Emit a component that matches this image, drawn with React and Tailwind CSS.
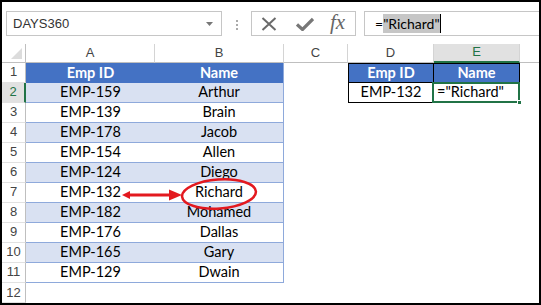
import React from 'react';

const rows = [
  ['EMP-159', 'Arthur'],
  ['EMP-139', 'Brain'],
  ['EMP-178', 'Jacob'],
  ['EMP-154', 'Allen'],
  ['EMP-124', 'Diego'],
  ['EMP-132', 'Richard'],
  ['EMP-182', 'Mohamed'],
  ['EMP-176', 'Dallas'],
  ['EMP-165', 'Gary'],
  ['EMP-129', 'Dwain'],
];

const cellFont = { fontFamily: 'Lato, "Open Sans", sans-serif' };

function RowHead({ n, selected }) {
  return (
    <div
      className={`flex items-center justify-center text-[13px] border-b border-[#e1e1e1] ${
        selected
          ? 'bg-[#e1e1e1] text-[#217346] border-r-2 border-r-[#217346]'
          : 'bg-white text-[#444] border-r border-r-[#bfbfbf]'
      }`}
    >
      {n}
    </div>
  );
}

function ColHead({ label, selected }) {
  return (
    <div
      className={`flex items-center justify-center text-[13px] border-r border-[#d4d4d4] ${
        selected
          ? 'bg-[#e1e1e1] text-[#217346] border-b-2 border-b-[#217346]'
          : 'bg-white text-[#444] border-b border-b-[#bfbfbf]'
      }`}
    >
      {label}
    </div>
  );
}

export default function App() {
  return (
    <div
      className="w-[541px] h-[305px] border-2 border-black bg-white flex flex-col overflow-hidden"
      style={{ fontFamily: '"Liberation Sans", Arial, sans-serif' }}
    >
      {/* toolbar: name box, buttons, formula bar */}
      <div className="h-[45px] flex items-start pl-[4px] pt-[9px]">
        <div className="w-[216px] h-[25px] border border-[#c6c6c6] flex items-center justify-between pl-[6px] pr-[8px] text-[13px] text-[#333]">
          <span>DAYS360</span>
          <svg width="7" height="4" viewBox="0 0 7 4"><path d="M0 0 H7 L3.5 4 Z" fill="#777" /></svg>
        </div>
        <div className="ml-[14px] mt-[9px] flex flex-col gap-[2px]">
          <span className="w-[2px] h-[2px] bg-[#aaa]" />
          <span className="w-[2px] h-[2px] bg-[#aaa]" />
          <span className="w-[2px] h-[2px] bg-[#aaa]" />
        </div>
        <div className="ml-[13px] w-[105px] h-[25px] border border-[#c6c6c6] flex items-center pl-[9px]">
          <svg width="16" height="14" viewBox="0 0 16 14">
            <path d="M1.5 1 L14.5 13 M14.5 1 L1.5 13" stroke="#6a6a6a" strokeWidth="2" />
          </svg>
          <svg className="ml-[19px]" width="18" height="14" viewBox="0 0 18 14">
            <path d="M1 7.5 L6.5 12.5 L17 2" stroke="#777" strokeWidth="3.2" fill="none" strokeLinejoin="miter" />
          </svg>
          <span
            className="ml-[16px] text-[21px] italic text-[#666] leading-none -mt-[2px]"
            style={{ fontFamily: '"Liberation Serif", serif' }}
          >
            fx
          </span>
        </div>
        <div
          className="ml-[8px] flex-1 h-[25px] border border-[#c6c6c6] border-r-0 flex items-center pl-[10px] text-[14px] text-black"
          style={cellFont}
        >
          <span>=</span>
          <span className="bg-[#c6c6c6] leading-[19px]">"Richard"</span>
          <span className="w-px h-[19px] bg-black" />
        </div>
      </div>

      {/* sheet grid */}
      <div className="relative flex-1 grid grid-cols-[24px_129px_129px_64px_86px_86px_1fr] grid-rows-[19px_repeat(11,20px)_1fr]">
        {/* column headers */}
        <div className="bg-white border-r border-[#bfbfbf] border-b border-b-[#bfbfbf] flex items-end justify-end p-[3px]">
          <svg width="11" height="11" viewBox="0 0 11 11"><path d="M11 0 V11 H0 Z" fill="#dcdcdc" /></svg>
        </div>
        <ColHead label="A" />
        <ColHead label="B" />
        <ColHead label="C" />
        <ColHead label="D" />
        <ColHead label="E" selected />
        <div className="bg-white border-b border-b-[#bfbfbf]" />

        {/* row 1 */}
        <RowHead n={1} />
        <div className="bg-[#4472c4] text-white font-bold text-[14.5px] flex items-center justify-center" style={cellFont}>Emp ID</div>
        <div className="bg-[#4472c4] text-white font-bold text-[14.5px] flex items-center justify-center border-r border-[#8ea9db]" style={cellFont}>Name</div>
        <div />
        <div className="bg-[#4472c4] text-white font-bold text-[14.5px] flex items-center justify-center border border-black" style={cellFont}>Emp ID</div>
        <div className="bg-[#4472c4] text-white font-bold text-[14.5px] flex items-center justify-center border-y border-r border-black" style={cellFont}>Name</div>
        <div />

        {/* rows 2-11 */}
        {rows.map(([id, name], i) => {
          const n = i + 2;
          const shade = n % 2 === 0 ? 'bg-[#d9e1f2]' : 'bg-white';
          return (
            <React.Fragment key={id}>
              <RowHead n={n} selected={n === 2} />
              <div className={`${shade} border-b border-[#8ea9db] flex items-center justify-center text-[14.5px] text-black`} style={cellFont}>
                {id}
              </div>
              <div className={`${shade} border-b border-r border-[#8ea9db] flex items-center justify-center text-[14.5px] text-black`} style={cellFont}>
                {name}
              </div>
              <div />
              {n === 2 ? (
                <>
                  <div className="border-x border-b border-black flex items-center justify-center text-[14.5px] text-black" style={cellFont}>
                    EMP-132
                  </div>
                  <div className="relative border-b border-r border-black flex items-center pl-[3px] text-[14.5px] text-black" style={cellFont}>
                    ="Richard"
                    <div className="absolute -left-[2px] -top-[1px] -right-[1px] -bottom-[1px] border-2 border-[#217346]" />
                    <div className="absolute -right-[3px] -bottom-[3px] w-[5px] h-[5px] bg-[#217346] border border-white" />
                  </div>
                </>
              ) : (
                <>
                  <div />
                  <div />
                </>
              )}
              <div />
            </React.Fragment>
          );
        })}

        {/* row 12 */}
        <RowHead n={12} />
        <div />
        <div />
        <div />
        <div />
        <div />
        <div />

        {/* red annotation: arrow and ellipse */}
        <svg className="absolute left-0 top-0 pointer-events-none" width="537" height="256" viewBox="0 0 537 256">
          <ellipse cx="217" cy="150" rx="37" ry="14.5" fill="none" stroke="#e3191f" strokeWidth="2.5" transform="rotate(-4 217 150)" />
          <path d="M126 151 H170" stroke="#e3191f" strokeWidth="3" />
          <path d="M120 151 L128 147 L128 155 Z" fill="#e3191f" />
          <path d="M180 151 L167 145.5 L167 156.5 Z" fill="#e3191f" />
        </svg>
      </div>
    </div>
  );
}
